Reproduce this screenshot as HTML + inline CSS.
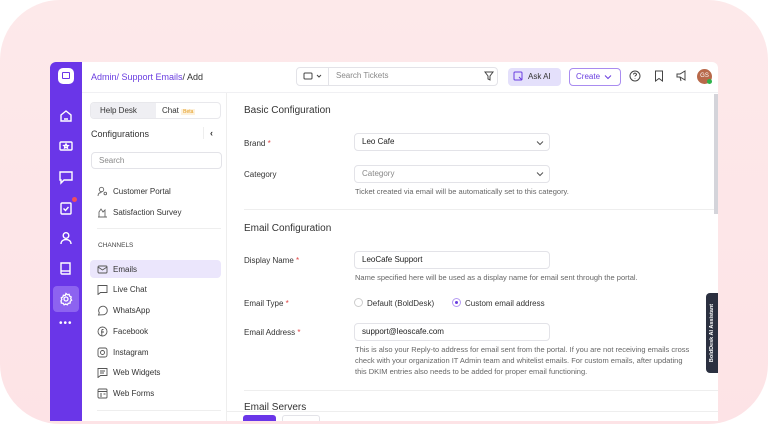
<!DOCTYPE html>
<html><head><meta charset="utf-8"><style>
*{box-sizing:border-box;margin:0;padding:0}
body{width:768px;height:424px;overflow:hidden;background:#fff;font-family:"Liberation Sans",sans-serif;position:relative;color:#333}
.bg{position:absolute;left:0;top:0;width:768px;height:424px;border-radius:60px;background:linear-gradient(180deg,#fde9ea,#fde3e6)}
.app{position:absolute;left:50px;top:62px;width:668px;height:359px;background:#fff;border-radius:6px 6px 0 0;overflow:hidden}
.side{position:absolute;left:0;top:0;width:32px;height:359px;background:#6a36e8}
.side svg{position:absolute;left:8px}
.a{position:absolute;white-space:nowrap}
.t{font-size:8px;color:#333}
.nav .a{font-size:8px;color:#333}
.nav svg{position:absolute;left:47px}
.inp{position:absolute;border:1px solid #e3e3e8;border-radius:4px;background:#fff;height:18px;font-size:8px;padding-left:7px;line-height:16px}
.hint{font-size:7.5px;color:#666;line-height:11px}
.req{color:#e04545}
</style></head><body>
<div class="bg"></div>
<div class="app">
 <div class="side">
  <div style="position:absolute;left:8px;top:6px;width:16px;height:16px;border-radius:5px;background:#fff"><div style="position:absolute;left:4px;top:4px;width:8px;height:7px;border:1.8px solid #6a36e8;border-radius:1px"></div></div>
  <svg style="top:46px" width="16" height="16" fill="none" stroke="#fff" stroke-width="1.4"><path d="M3 7l5-4 5 4v6H3z"/><path d="M6 11h4"/></svg>
  <svg style="top:76px" width="16" height="16" fill="none" stroke="#fff" stroke-width="1.4"><rect x="2" y="4" width="12" height="8" rx="1"/><path d="M8 6l.7 1.4 1.5.2-1.1 1 .3 1.5L8 9.4 6.6 10l.3-1.5-1.1-1 1.5-.2z"/></svg>
  <svg style="top:107px" width="16" height="16" fill="none" stroke="#fff" stroke-width="1.4"><path d="M2 3h12v8H6l-3 3v-3H2z"/></svg>
  <svg style="top:138px" width="16" height="16" fill="none" stroke="#fff" stroke-width="1.4"><rect x="3" y="3" width="10" height="11" rx="1"/><path d="M5.5 8.5l2 2 3-3.5"/></svg>
  <div style="position:absolute;left:22px;top:135px;width:5px;height:5px;border-radius:50%;background:#f04d5e"></div>
  <svg style="top:168px" width="16" height="16" fill="none" stroke="#fff" stroke-width="1.4"><circle cx="8" cy="5.5" r="2.8"/><path d="M3 14c0-3 2.2-4.5 5-4.5s5 1.5 5 4.5"/></svg>
  <svg style="top:198px" width="16" height="16" fill="none" stroke="#fff" stroke-width="1.4"><path d="M3 3h9v11H4a1 1 0 01-1-1z"/><path d="M3 11h9"/></svg>
  <div style="position:absolute;left:3px;top:224px;width:26px;height:26px;border-radius:4px;background:#8d63f0"></div>
  <svg style="top:229px" width="16" height="16" fill="none" stroke="#fff" stroke-width="1.3"><circle cx="8" cy="8" r="2"/><path d="M8 2.5l1.3 1.2 1.8-.3.5 1.7 1.6.9-.5 1.7.9 1.5-1.4 1.1-.1 1.8-1.8.2-1 1.5-1.6-.8-1.6.8-1-1.5-1.8-.2-.1-1.8L2.9 10l.9-1.5-.5-1.7 1.6-.9.5-1.7 1.8.3z"/></svg>
  <div class="a" style="left:9px;top:256px;color:#fff;font-size:10px;letter-spacing:1px">•••</div>
 </div>
 <!-- header -->
 <div class="a" style="left:41px;top:10px;font-size:9px;color:#6a3ee0">Admin/ Support Emails<span style="color:#333">/ Add</span></div>
 <div style="position:absolute;left:246px;top:5px;width:202px;height:19px;border:1px solid #e3e3e8;border-radius:4px"></div>
 <div style="position:absolute;left:278px;top:6px;width:1px;height:17px;background:#e3e3e8"></div>
 <svg style="position:absolute;left:253px;top:9px" width="22" height="10" fill="none" stroke="#444" stroke-width="1"><rect x="1" y="2" width="8" height="6" rx="1"/><path d="M14 4l2 2 2-2"/></svg>
 <div class="a" style="left:286px;top:9px;font-size:8px;color:#888">Search Tickets</div>
 <svg style="position:absolute;left:434px;top:9px" width="10" height="10" fill="none" stroke="#444" stroke-width="1"><path d="M1 1h8L6 5v4L4 8V5z"/></svg>
 <div style="position:absolute;left:458px;top:6px;width:53px;height:18px;border-radius:4px;background:#e4e0fb"></div>
 <svg style="position:absolute;left:463px;top:9px" width="11" height="11" fill="none" stroke="#6a3ee0" stroke-width="1"><rect x="1" y="1" width="8" height="8" rx="1"/><path d="M6 6l3 3"/></svg>
 <div class="a" style="left:478px;top:10px;font-size:8px;color:#333">Ask AI</div>
 <div style="position:absolute;left:519px;top:6px;width:52px;height:18px;border:1px solid #a98cf0;border-radius:4px"></div>
 <div class="a" style="left:526px;top:10px;font-size:8px;color:#6a3ee0">Create</div>
 <svg style="position:absolute;left:554px;top:11px" width="8" height="8" fill="none" stroke="#6a3ee0"><path d="M1 2.5l3 3 3-3"/></svg>
 <svg style="position:absolute;left:579px;top:8px" width="12" height="12" fill="none" stroke="#444" stroke-width="1"><circle cx="6" cy="6" r="5"/><path d="M4.5 4.5a1.5 1.5 0 113 .3c-.5.6-1.5.8-1.5 1.7M6 8.5v.5"/></svg>
 <svg style="position:absolute;left:603px;top:8px" width="12" height="12" fill="none" stroke="#444" stroke-width="1"><path d="M2.5 1h7v10L6 8.5 2.5 11z"/></svg>
 <svg style="position:absolute;left:626px;top:8px" width="12" height="12" fill="none" stroke="#444" stroke-width="1"><path d="M1 4h3l5-3v9L4 7H1zM4 7l1 4"/></svg>
 <div style="position:absolute;left:647px;top:7px;width:15px;height:15px;border-radius:50%;background:#b8694a;color:#fff;font-size:6px;text-align:center;line-height:15px">GS</div>
 <div style="position:absolute;left:657px;top:17px;width:5px;height:5px;border-radius:50%;background:#2fb24b"></div>
 <div style="position:absolute;left:32px;top:30px;width:636px;height:1px;background:#f0f0f3"></div>
 <!-- left nav -->
 <div class="nav">
  <div style="position:absolute;left:40px;top:40px;width:131px;height:17px;border:1px solid #e8e8ec;border-radius:4px;overflow:hidden"><div style="width:65px;height:100%;background:#efeff3"></div></div>
  <div class="a" style="left:50px;top:44px">Help Desk</div>
  <div class="a" style="left:112px;top:44px">Chat <span style="font-size:5px;color:#e49a1a;background:#fdf1dc;padding:0 2px">Beta</span></div>
  <div class="a" style="left:41px;top:67px;font-size:9px;color:#333">Configurations</div>
  <div style="position:absolute;left:153px;top:65px;width:1px;height:12px;background:#eee"></div>
  <div class="a" style="left:160px;top:66px;font-size:9px;font-weight:bold">‹</div>
  <div class="inp" style="left:41px;top:90px;width:131px;height:17px;color:#888">Search</div>
  <svg style="top:124px" width="11" height="11" fill="none" stroke="#666" stroke-width="0.9"><circle cx="4.5" cy="3.5" r="2.2"/><path d="M1 10c0-2.5 1.5-3.5 3.5-3.5M7 7.5a1.3 1.3 0 102.6 0 1.3 1.3 0 10-2.6 0"/></svg>
  <div class="a" style="left:63px;top:125px">Customer Portal</div>
  <svg style="top:145px" width="11" height="11" fill="none" stroke="#666" stroke-width="0.9"><path d="M2 10V5l2-3 2 3 2-2v7zM1 10h9"/></svg>
  <div class="a" style="left:63px;top:146px">Satisfaction Survey</div>
  <div style="position:absolute;left:47px;top:166px;width:124px;height:1px;background:#eee"></div>
  <div class="a" style="left:48px;top:180px;font-size:6.5px;color:#444">CHANNELS</div>
  <div style="position:absolute;left:40px;top:198px;width:131px;height:18px;border-radius:4px;background:#ebe6fc"></div>
  <svg style="top:202px" width="11" height="11" fill="none" stroke="#555" stroke-width="0.9"><rect x="1" y="2" width="9" height="7" rx="1"/><path d="M1 3l4.5 3L10 3"/></svg>
  <div class="a" style="left:63px;top:203px">Emails</div>
  <svg style="top:222px" width="11" height="11" fill="none" stroke="#555" stroke-width="0.9"><path d="M1 1.5h9v7H3.5L1 10.5z"/></svg>
  <div class="a" style="left:63px;top:223px">Live Chat</div>
  <svg style="top:243px" width="11" height="11" fill="none" stroke="#555" stroke-width="0.9"><path d="M1.5 10l.8-2.2A4.3 4.3 0 115.5 9.8z"/></svg>
  <div class="a" style="left:63px;top:244px">WhatsApp</div>
  <svg style="top:264px" width="11" height="11" fill="none" stroke="#555" stroke-width="0.9"><circle cx="5.5" cy="5.5" r="4.5"/><path d="M6.5 3.5h-.8c-.6 0-.9.3-.9.9V10M4 6h3"/></svg>
  <div class="a" style="left:63px;top:265px">Facebook</div>
  <svg style="top:285px" width="11" height="11" fill="none" stroke="#555" stroke-width="0.9"><rect x="1" y="1" width="9" height="9" rx="2"/><circle cx="5.5" cy="5.5" r="2"/></svg>
  <div class="a" style="left:63px;top:286px">Instagram</div>
  <svg style="top:305px" width="11" height="11" fill="none" stroke="#555" stroke-width="0.9"><path d="M1 1.5h9v7H3.5L1 10.5zM3 4h5M3 6h4"/></svg>
  <div class="a" style="left:63px;top:306px">Web Widgets</div>
  <svg style="top:326px" width="11" height="11" fill="none" stroke="#555" stroke-width="0.9"><rect x="1" y="1" width="9" height="9" rx="1"/><path d="M1 3.5h9M3 6h2M3 8h2M6.5 6h2"/></svg>
  <div class="a" style="left:63px;top:327px">Web Forms</div>
  <div style="position:absolute;left:47px;top:348px;width:124px;height:1px;background:#eee"></div>
 </div>
 <div style="position:absolute;left:176px;top:31px;width:1px;height:328px;background:#eee"></div>
 <!-- main -->
 <div class="a" style="left:194px;top:43px;font-size:10px;color:#333">Basic Configuration</div>
 <div class="a t" style="left:194px;top:77px">Brand <span class="req">*</span></div>
 <div class="inp" style="left:304px;top:71px;width:196px;color:#222">Leo Cafe</div>
 <svg style="position:absolute;left:486px;top:77px" width="8" height="8" fill="none" stroke="#555"><path d="M1 2.5l3 3 3-3"/></svg>
 <div class="a t" style="left:194px;top:108px">Category</div>
 <div class="inp" style="left:304px;top:103px;width:196px;color:#888">Category</div>
 <svg style="position:absolute;left:486px;top:108px" width="8" height="8" fill="none" stroke="#555"><path d="M1 2.5l3 3 3-3"/></svg>
 <div class="a hint" style="left:305px;top:124px">Ticket created via email will be automatically set to this category.</div>
 <div style="position:absolute;left:194px;top:147px;width:480px;height:1px;background:#eee"></div>
 <div class="a" style="left:194px;top:161px;font-size:10px;color:#333">Email Configuration</div>
 <div class="a t" style="left:194px;top:194px">Display Name <span class="req">*</span></div>
 <div class="inp" style="left:304px;top:189px;width:196px;color:#222">LeoCafe Support</div>
 <div class="a hint" style="left:305px;top:210px">Name specified here will be used as a display name for email sent through the portal.</div>
 <div class="a t" style="left:194px;top:237px">Email Type <span class="req">*</span></div>
 <div style="position:absolute;left:304px;top:236px;width:9px;height:9px;border-radius:50%;border:1px solid #ccc"></div>
 <div class="a t" style="left:317px;top:237px">Default (BoldDesk)</div>
 <div style="position:absolute;left:402px;top:236px;width:9px;height:9px;border-radius:50%;border:1px solid #b49af2;background:#fff"><div style="margin:2px;width:3px;height:3px;border-radius:50%;background:#6a3ee0"></div></div>
 <div class="a t" style="left:415px;top:237px">Custom email address</div>
 <div class="a t" style="left:194px;top:266px">Email Address <span class="req">*</span></div>
 <div class="inp" style="left:304px;top:261px;width:196px;color:#222">support@leoscafe.com</div>
 <div class="a hint" style="left:305px;top:282px">This is also your Reply-to address for email sent from the portal. If you are not receiving emails cross<br>check with your organization IT Admin team and whitelist emails. For custom emails, after updating<br>this DKIM entries also needs to be added for proper email functioning.</div>
 <div style="position:absolute;left:194px;top:328px;width:480px;height:1px;background:#eee"></div>
 <div class="a" style="left:194px;top:340px;font-size:10px;color:#333">Email Servers</div>
 <div style="position:absolute;left:176px;top:349px;width:492px;height:1px;background:#eee"></div>
 <div style="position:absolute;left:193px;top:353px;width:33px;height:10px;border-radius:3px;background:#6a36e8"></div>
 <div style="position:absolute;left:232px;top:353px;width:38px;height:10px;border-radius:3px;border:1px solid #e3e3e8"></div>
 <div style="position:absolute;left:664px;top:32px;width:4px;height:120px;background:#d4d4da"></div>
</div>
<div style="position:absolute;left:706px;top:293px;width:12px;height:80px;background:#2b3040;border-radius:4px 0 0 4px"></div>
<div class="a" style="left:712px;top:333px;transform:translate(-50%,-50%) rotate(-90deg);font-size:5.5px;font-weight:bold;color:#fff">BoldDesk AI Assistant</div>
</body></html>
